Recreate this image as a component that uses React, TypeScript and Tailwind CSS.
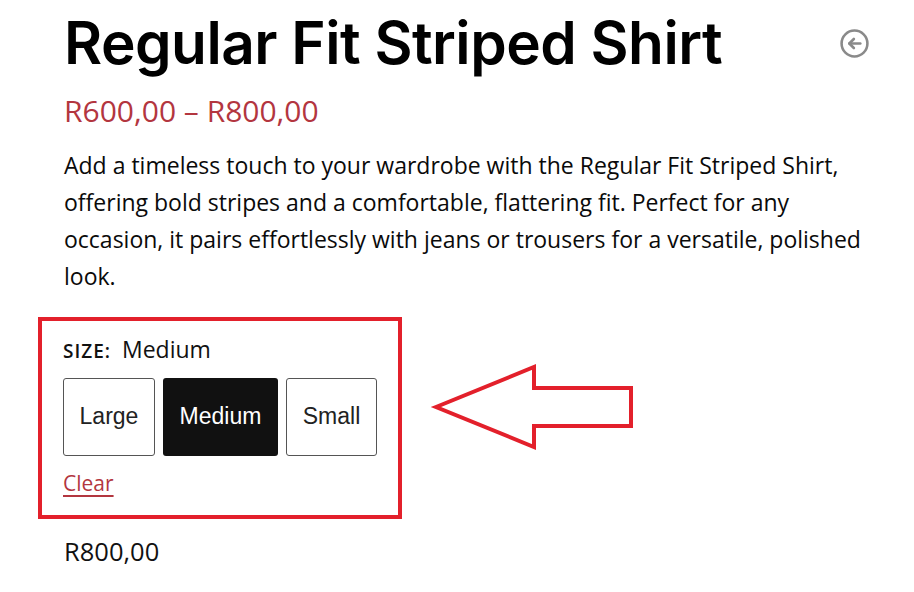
import React from "react";

export default function App() {
  return (
    <div className="relative w-[914px] h-[592px] bg-white overflow-hidden">
      <div className="pl-[64px] pr-[44px] pt-[9px]">
        <div className="flex items-start justify-between">
          <h1 className="font-['Inter',sans-serif] font-semibold text-[58.5px] leading-[68px] tracking-[-0.5px] text-black">
            Regular Fit Striped Shirt
          </h1>
          <svg width="31" height="31" viewBox="0 0 24 24" className="mt-[19px]" fill="none" stroke="#8a8a8a" strokeWidth="2" strokeLinecap="round" strokeLinejoin="round">
            <circle cx="12" cy="12" r="10" />
            <path d="M16.5 12H8" />
            <path d="M11.5 8.5L8 12l3.5 3.5" />
          </svg>
        </div>
        <div className="mt-[16px] font-['Open_Sans',sans-serif] text-[30px] leading-[36px] text-[#b3363f]">
          R600,00 – R800,00
        </div>
        <p className="mt-[18px] w-[800px] font-['Open_Sans',sans-serif] text-[23px] leading-[37px] text-[#0a0a0a]">
          Add a timeless touch to your wardrobe with the Regular Fit Striped Shirt, offering bold stripes and a comfortable, flattering fit. Perfect for any occasion, it pairs effortlessly with jeans or trousers for a versatile, polished look.
        </p>
      </div>
      <div className="ml-[38px] mt-[22px] w-[364px] h-[202px] border-[4px] border-[#e3202b] pl-[21px] pt-[11px]">
        <div className="flex items-baseline gap-[11px] text-[#111]">
          <span className="font-['Open_Sans',sans-serif] font-semibold text-[19px] tracking-[1px]">SIZE:</span>
          <span className="font-['Open_Sans',sans-serif] text-[23px]">Medium</span>
        </div>
        <div className="mt-[11px] flex gap-[8px]">
          <div className="w-[92px] h-[78px] border border-[#555] rounded-[3px] flex items-center justify-center font-['Liberation_Sans',sans-serif] text-[23px] text-[#222]">Large</div>
          <div className="w-[115px] h-[78px] bg-[#111] rounded-[3px] flex items-center justify-center font-['Liberation_Sans',sans-serif] text-[23px] text-white">Medium</div>
          <div className="w-[91px] h-[78px] border border-[#555] rounded-[3px] flex items-center justify-center font-['Liberation_Sans',sans-serif] text-[23px] text-[#222]">Small</div>
        </div>
        <div className="mt-[12px] font-['Open_Sans',sans-serif] text-[21px] text-[#b3363f] underline underline-offset-[4px]">Clear</div>
      </div>
      <div className="pl-[64px] mt-[13px] font-['Open_Sans',sans-serif] text-[25.5px] text-[#111]">R800,00</div>
      <svg className="absolute left-0 top-0 pointer-events-none" width="914" height="592">
        <polygon points="436,407 534,367 534,388 631,388 631,426 534,426 534,447" fill="none" stroke="#e3202b" strokeWidth="4" strokeLinejoin="miter" />
      </svg>
    </div>
  );
}
